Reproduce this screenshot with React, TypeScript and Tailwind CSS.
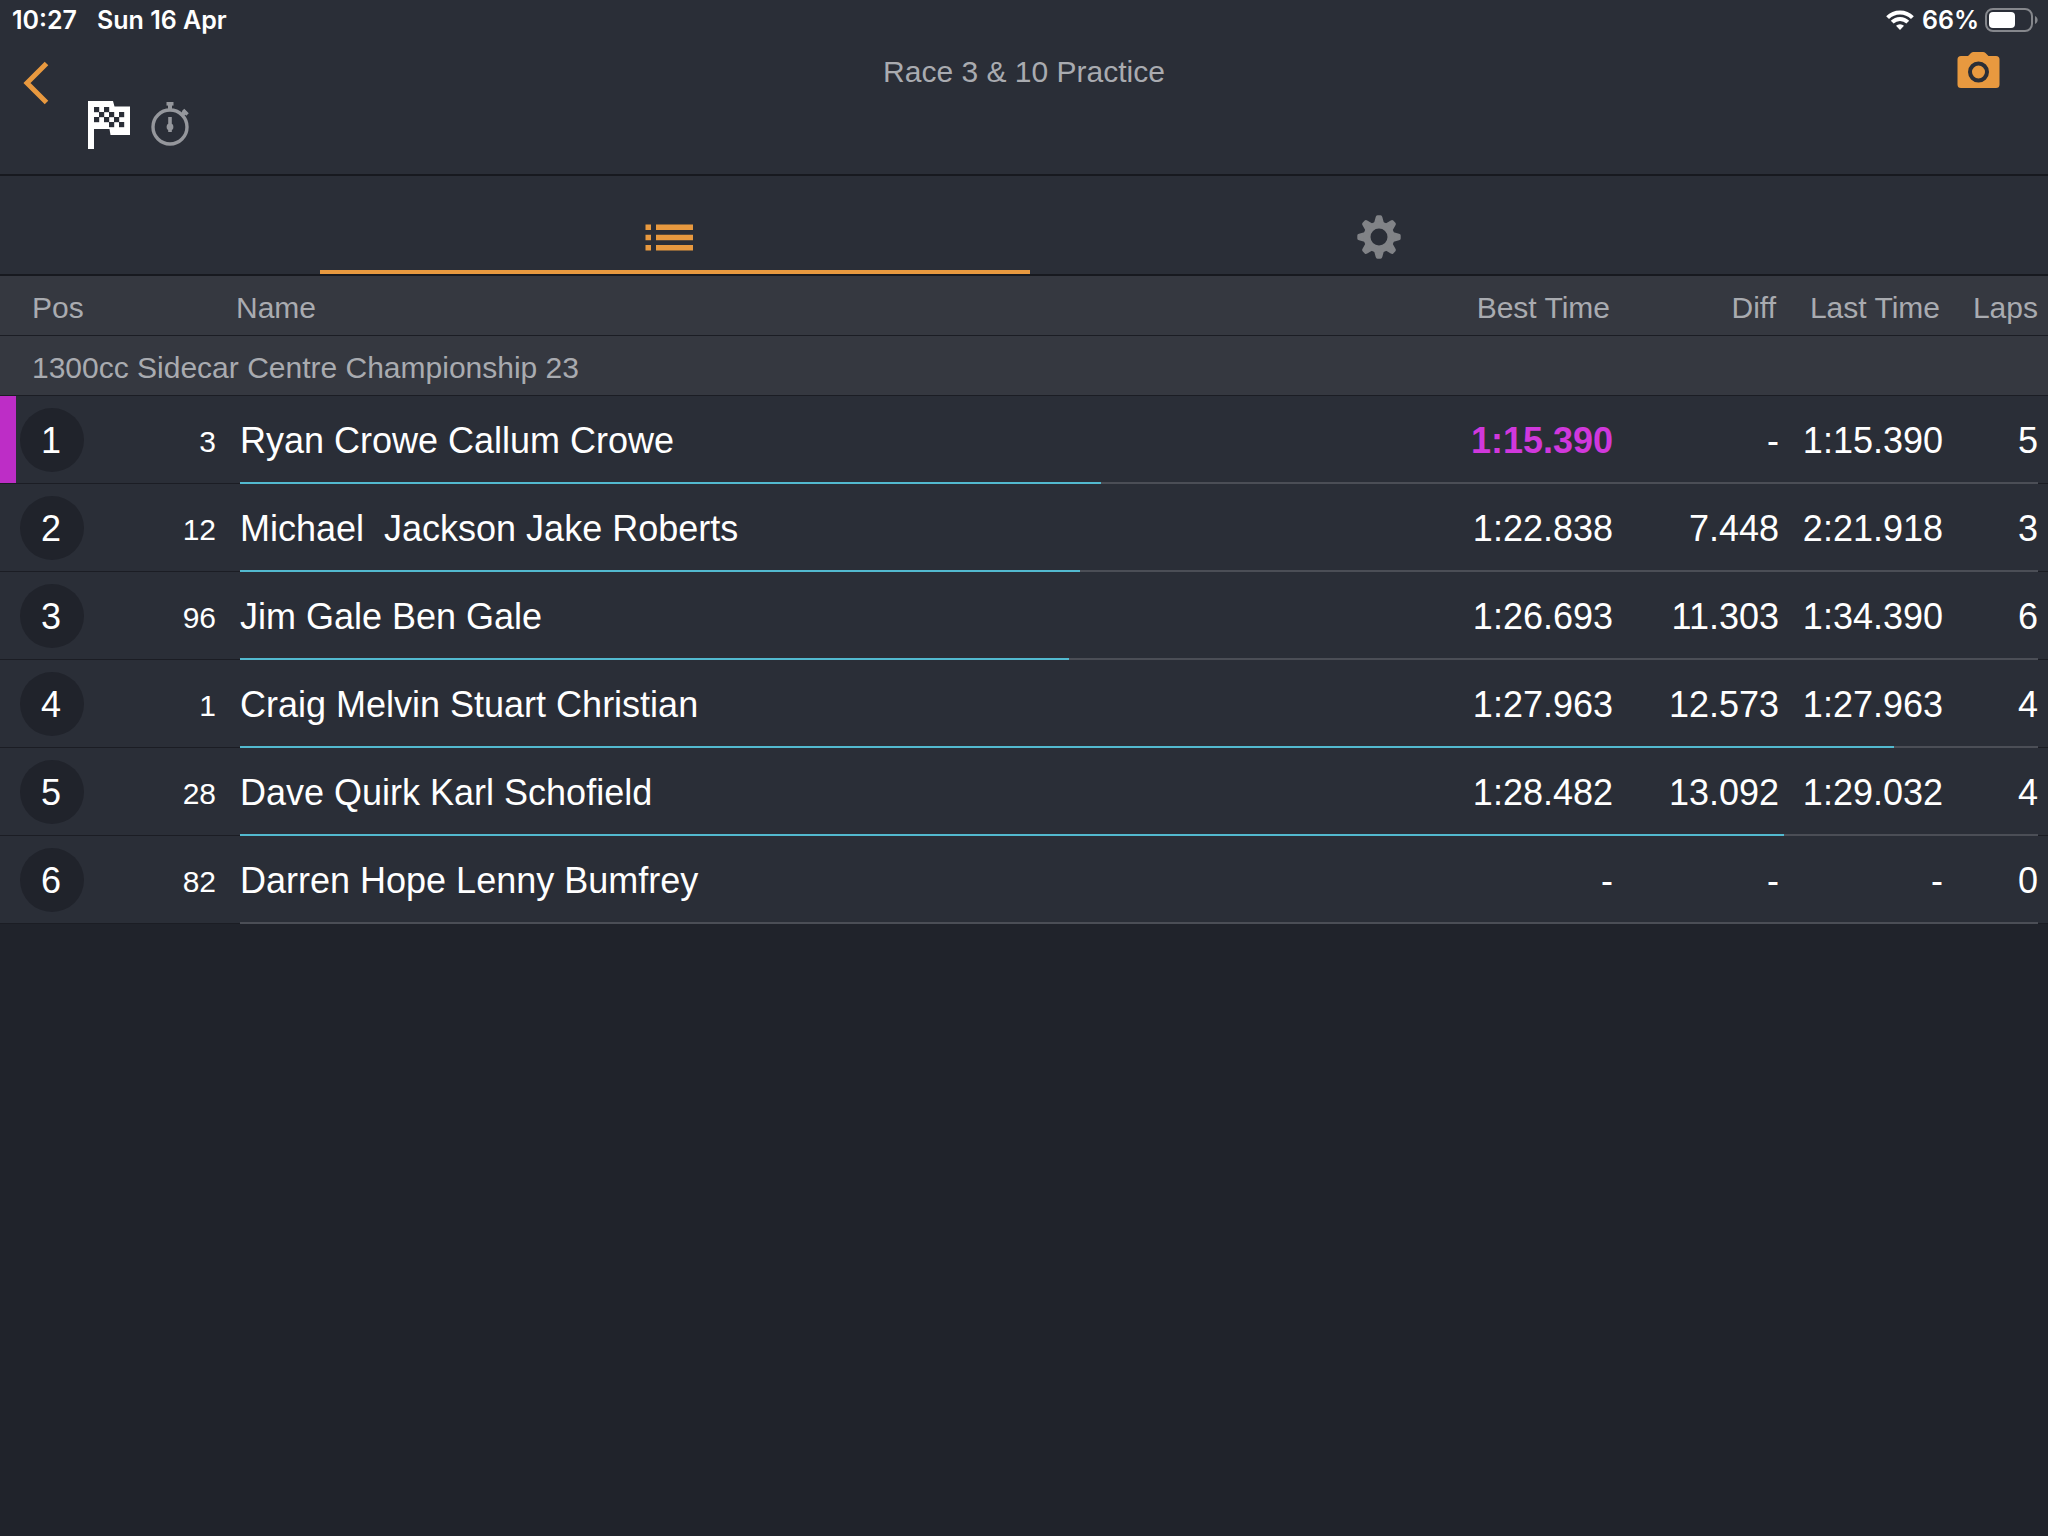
import { useState } from "react"

interface Entry {
  pos: number
  number: string
  name: string
  best: string
  diff: string
  last: string
  laps: number
  progress: number
  fastest?: boolean
}

const entries: Entry[] = [
  { pos: 1, number: "3", name: "Ryan Crowe Callum Crowe", best: "1:15.390", diff: "-", last: "1:15.390", laps: 5, progress: 47.9, fastest: true },
  { pos: 2, number: "12", name: "Michael  Jackson Jake Roberts", best: "1:22.838", diff: "7.448", last: "2:21.918", laps: 3, progress: 46.7 },
  { pos: 3, number: "96", name: "Jim Gale Ben Gale", best: "1:26.693", diff: "11.303", last: "1:34.390", laps: 6, progress: 46.1 },
  { pos: 4, number: "1", name: "Craig Melvin Stuart Christian", best: "1:27.963", diff: "12.573", last: "1:27.963", laps: 4, progress: 92 },
  { pos: 5, number: "28", name: "Dave Quirk Karl Schofield", best: "1:28.482", diff: "13.092", last: "1:29.032", laps: 4, progress: 85.9 },
  { pos: 6, number: "82", name: "Darren Hope Lenny Bumfrey", best: "-", diff: "-", last: "-", laps: 0, progress: 0 },
]

function StatusBar() {
  return (
    <div className="flex h-10 items-center justify-between pr-2.5 pl-3 font-['Inter',sans-serif] text-[25px] leading-10 font-semibold text-white">
      <div className="flex gap-5">
        <span>10:27</span>
        <span>Sun 16 Apr</span>
      </div>
      <div className="flex items-center">
        <svg width="28" height="20" viewBox="0 0 28 20" fill="none" stroke="#fff" strokeWidth="4">
          <path d="M1.6 7.6a17.4 17.4 0 0 1 24.8 0" />
          <path d="M6.2 12.2a11 11 0 0 1 15.6 0" />
          <path d="M14 20l-4-4.2a5.8 5.8 0 0 1 8 0z" fill="#fff" stroke="none" />
        </svg>
        <span className="ml-2">66%</span>
        <svg className="ml-1.5" width="53" height="24" viewBox="0 0 53 24">
          <rect x="1" y="1" width="46" height="22" rx="7" fill="none" stroke="#85878c" strokeWidth="2" />
          <rect x="4" y="4" width="26" height="16" rx="4" fill="#fff" />
          <path d="M50 8c3.500 1.400 3.500 6.600 0 8z" fill="#85878c" />
        </svg>
      </div>
    </div>
  )
}

function FlagIcon() {
  const squares = [
    [6, 6], [16, 6],
    [11, 11], [21, 11], [31, 11],
    [6, 16], [16, 16], [26, 16],
    [21, 21], [31, 21],
  ]
  return (
    <svg width="42" height="48" viewBox="0 0 42 48">
      <path d="M0 0H25L26.500 5.500H42V34H22.500L21.500 28H6V48H0Z" fill="#fff" />
      {squares.map(([x, y]) => (
        <rect key={`${x}-${y}`} x={x} y={y} width="5.200" height="5.200" fill="#2a2e37" />
      ))}
    </svg>
  )
}

function StopwatchIcon() {
  return (
    <svg width="38" height="46" viewBox="0 -1 38 46" fill="none" stroke="#95979c">
      <circle cx="19" cy="25" r="17" strokeWidth="3.400" />
      <path d="M15.500 1.800h7" strokeWidth="3.600" />
      <path d="M19 2v6" strokeWidth="4" />
      <path d="M31 13l4-4" strokeWidth="4" />
      <path d="M32 8l4.500 4.500" strokeWidth="3.500" />
      <path d="M19 15v15" strokeWidth="3.600" />
      <circle cx="19" cy="25" r="3.400" fill="#95979c" stroke="none" />
    </svg>
  )
}

function GearIcon() {
  return (
    <svg width="44" height="44" viewBox="-22 -22 44 44">
      <g fill="#818387">
        {[0, 45, 90, 135, 180, 225, 270, 315].map((a) => (
          <path key={a} transform={`rotate(${a})`} d="M-5.500 -12L-3.300 -20Q-3 -21.700 -1.500 -21.700H1.500Q3 -21.700 3.300 -20L5.500 -12Z" />
        ))}
      </g>
      <circle r="12" fill="none" stroke="#818387" strokeWidth="7" />
    </svg>
  )
}

export default function App() {
  const [tab, setTab] = useState<"results" | "settings">("results")

  return (
    <div className="min-h-screen bg-[#20232b] font-['Liberation_Sans',Arial,sans-serif] text-white">
      <header className="border-b-2 border-[#17191f] bg-[#2a2e37]">
        <StatusBar />
        <div className="grid h-[134px] grid-cols-[1fr_auto_1fr] items-start">
          <div className="flex items-start">
            <button aria-label="Back" className="pt-[21px] pl-[22px]">
              <svg width="28" height="44" viewBox="0 0 28 44" fill="none" stroke="#e8993f" strokeWidth="5">
                <path d="M24.500 2.500L5 22L24.500 41.500" />
              </svg>
            </button>
            <div className="flex gap-[21px] pt-[61px] pl-[38px]">
              <FlagIcon />
              <StopwatchIcon />
            </div>
          </div>
          <h1 className="pt-3 text-[30px] leading-10 text-[#a9abb0]">Race 3 &amp; 10 Practice</h1>
          <button aria-label="Take photo" className="justify-self-end pt-3 pr-12">
            <svg width="43" height="36" viewBox="0 0 43 36">
              <path d="M4 4H11L14 1Q15 0 16.500 0H26Q27.500 0 28.500 1L31.500 4H39Q42.500 4 42.500 7.500V32.500Q42.500 36 39 36H4Q0.500 36 0.500 32.500V7.500Q0.500 4 4 4Z" fill="#e8993f" />
              <circle cx="21.500" cy="20" r="8.500" fill="none" stroke="#2a2e37" strokeWidth="4" />
            </svg>
          </button>
        </div>
      </header>

      <nav className="flex h-[100px] border-b-2 border-[#17191f] bg-[#2a2e37] pr-[308px] pl-80">
        <button
          aria-label="Results"
          onClick={() => setTab("results")}
          className={`flex flex-1 items-center justify-center border-b-4 pt-7 pr-3 ${tab === "results" ? "border-[#e8993f]" : "border-transparent"}`}
        >
          <svg width="48" height="28" viewBox="-.5 -1 48 28" fill="#e8993f">
            <path d="M0 .5h5.500v5.500H0zM10.500 .5H47.500v5.500H10.500zM0 10.800h5.500v5.500H0zM10.500 10.800H47.500v5.500H10.500zM0 21h5.500v5.500H0zM10.500 21H47.500v5.500H10.500z" />
          </svg>
        </button>
        <button
          aria-label="Settings"
          onClick={() => setTab("settings")}
          className={`flex flex-1 items-center justify-center border-b-4 pt-7 pr-3 ${tab === "settings" ? "border-[#e8993f]" : "border-transparent"}`}
        >
          <GearIcon />
        </button>
      </nav>

      <table className="w-full table-fixed border-separate border-spacing-0 text-right text-[36px] leading-10">
        <colgroup>
          <col className="w-[104px]" />
          <col className="w-[112px]" />
          <col />
          <col className="w-[180px]" />
          <col className="w-[166px]" />
          <col className="w-[164px]" />
          <col className="w-[105px]" />
        </colgroup>
        <thead className="bg-[#353840] text-[30px] text-[#a9abb0] [&_th]:h-[60px] [&_th]:border-b [&_th]:border-[#1b1d24] [&_th]:pt-1 [&_th]:font-normal">
          <tr>
            <th scope="col" className="pl-8 text-left">Pos</th>
            <th></th>
            <th scope="col" className="pl-5 text-left">Name</th>
            <th scope="col" className="pr-[3px]">Best Time</th>
            <th scope="col" className="pr-[3px]">Diff</th>
            <th scope="col" className="pr-[3px]">Last Time</th>
            <th scope="col" className="pr-2.5">Laps</th>
          </tr>
          <tr>
            <th colSpan={7} scope="colgroup" className="pl-8 text-left">
              1300cc Sidecar Centre Championship 23
            </th>
          </tr>
        </thead>
        <tbody className="bg-[#2a2e37] [&_td]:h-[88px] [&_td]:border-b [&_td]:border-[#1b1d24]">
          {entries.map((e) => (
            <tr key={e.pos} className="relative">
              <td className={e.fastest ? "pl-5 shadow-[inset_16px_0_#bd2dc6]" : "pl-5"}>
                <span className="flex size-16 items-center justify-center rounded-full bg-[#20232b] pt-0.5 pr-0.5">{e.pos}</span>
              </td>
              <td className="pt-1 text-[30px]">{e.number}</td>
              <td className="pt-0.5 pl-6 text-left whitespace-pre">{e.name}</td>
              <td className={e.fastest ? "pt-0.5 font-bold text-[#d038dc]" : "pt-0.5"}>{e.best}</td>
              <td className="pt-0.5">{e.diff}</td>
              <td className="pt-0.5">{e.last}</td>
              <td className="pt-0.5 pr-2.5">
                {e.laps}
                {/* lap progress, drawn over the row border */}
                <div className="absolute right-2.5 bottom-0 left-60 h-0.5 bg-[#4b4e56]">
                  <div className="h-full bg-[#52b9cf]" style={{ width: `${e.progress}%` }} />
                </div>
              </td>
            </tr>
          ))}
        </tbody>
      </table>
    </div>
  )
}
